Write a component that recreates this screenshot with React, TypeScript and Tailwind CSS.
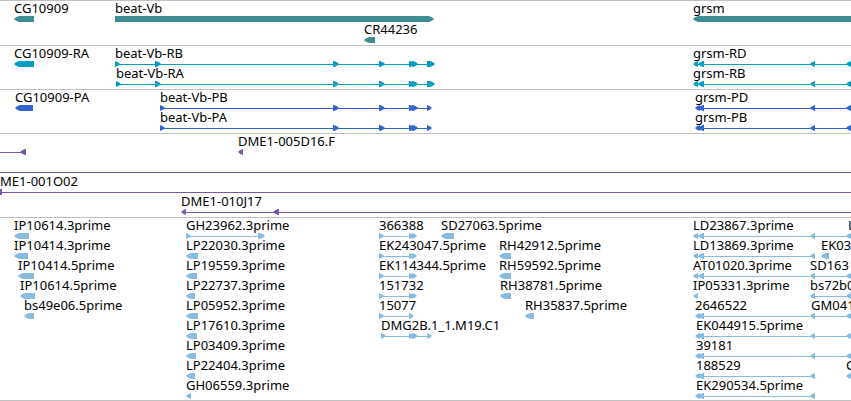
import React from "react";

type Dir = "l" | "r";
type Block = [number, number];

interface Feature {
  label?: string;
  x: number;
  dir: Dir;
  blocks: Block[];
  end?: number;
}

interface Track {
  name: string;
  fill: string;
  spaced?: boolean;
  rows: Feature[][];
}

const EDGE = 4000;

const f = (label: string, x: number, dir: Dir, blocks: Block[], end?: number): Feature => ({
  label,
  x,
  dir,
  blocks,
  end,
});

const beatTail: Block[] = [[333, 339], [379, 385], [409, 415], [412, 418]];
const est: Block[] = [[379, 384], [409, 414], [412, 417]];
const grsmA: Block[] = [[693, 698], [698, 704]];
const grsmB: Block[] = [[695, 700], [698, 704]];
const grsmMid: Block = [810, 815];
const grsmEnd: Block = [846, 852];

const tracks: Track[] = [
  {
    name: "Genes",
    fill: "fill-[#408c92]",
    spaced: true,
    rows: [
      [
        f("CG10909", 14, "l", [[14, 34]]),
        f("beat-Vb", 115, "r", [[115, 434]]),
        f("grsm", 693, "l", [[693, EDGE]]),
      ],
      [f("CR44236", 364, "l", [[364, 375]])],
    ],
  },
  {
    name: "Transcripts",
    fill: "fill-[#009fbf]",
    rows: [
      [
        f("CG10909-RA", 14, "l", [[14, 34]]),
        f("beat-Vb-RB", 115, "r", [[115, 120], [155, 161], ...beatTail, [427, 435]]),
        f("grsm-RD", 693, "l", [...grsmA, grsmMid, grsmEnd], EDGE),
      ],
      [
        f("beat-Vb-RA", 116, "r", [[116, 121], [155, 161], ...beatTail, [427, 435]]),
        f("grsm-RB", 693, "l", [...grsmA, grsmMid, grsmEnd], EDGE),
      ],
    ],
  },
  {
    name: "Proteins",
    fill: "fill-[#3366cc]",
    rows: [
      [
        f("CG10909-PA", 15, "l", [[15, 33]]),
        f("beat-Vb-PB", 160, "r", [[160, 165], ...beatTail, [427, 432]]),
        f("grsm-PD", 695, "l", [...grsmB, grsmMid, grsmEnd], EDGE),
      ],
      [
        f("beat-Vb-PA", 160, "r", [[160, 165], ...beatTail, [427, 432]]),
        f("grsm-PB", 695, "l", [...grsmB, grsmMid, grsmEnd], EDGE),
      ],
    ],
  },
  {
    name: "Clones",
    fill: "fill-[#7758a8]",
    rows: [
      [
        { x: 0, dir: "l", blocks: [[20, 26]] },
        f("DME1-005D16.F", 238, "l", [[238, 243]]),
      ],
      [{ x: 0, dir: "l", blocks: [], end: EDGE }],
      [f("ME1-001O02", 0, "l", [[-6, 2]], EDGE)],
      [f("DME1-010J17", 181, "l", [[181, 186], [273, 279]], EDGE)],
    ],
  },
  {
    name: "ESTs",
    fill: "fill-[#88bbdd]",
    rows: [
      [
        f("IP10614.3prime", 14, "l", [[14, 29]]),
        f("GH23962.3prime", 186, "r", [[186, 191], [258, 265]]),
        f("366388", 379, "r", est),
        f("SD27063.5prime", 441, "l", [[441, 454]]),
        f("LD23867.3prime", 693, "l", [...grsmA, grsmMid, grsmEnd], EDGE),
        f("L", 848, "l", []),
      ],
      [
        f("IP10414.3prime", 14, "l", [[14, 28]]),
        f("LP22030.3prime", 186, "l", [[186, 198]]),
        f("EK243047.5prime", 379, "r", est),
        f("RH42912.5prime", 499, "l", [[499, 511]]),
        f("LD13869.3prime", 693, "l", [...grsmA, grsmMid]),
        f("EK03", 821, "l", [[821, 829]]),
      ],
      [
        f("IP10414.5prime", 18, "l", [[18, 34]]),
        f("LP19559.3prime", 186, "l", [[186, 197]]),
        f("EK114344.5prime", 379, "r", est),
        f("RH59592.5prime", 499, "l", [[499, 511]]),
        f("AT01020.3prime", 693, "l", grsmA, 810),
        f("SD163", 810, "l", [grsmMid, grsmEnd], EDGE),
      ],
      [
        f("IP10614.5prime", 20, "l", [[20, 35]]),
        f("LP22737.3prime", 186, "l", [[186, 195]]),
        f("151732", 379, "r", est),
        f("RH38781.5prime", 500, "l", [[500, 511]]),
        f("IP05331.3prime", 693, "l", [[693, 698]]),
        f("bs72b0", 810, "l", [grsmMid, grsmEnd], EDGE),
      ],
      [
        f("bs49e06.5prime", 24, "l", [[24, 34]]),
        f("LP05952.3prime", 186, "l", [[186, 198]]),
        f("15077", 379, "r", [[379, 384], [409, 414]]),
        f("RH35837.5prime", 525, "l", [[525, 534]]),
        f("2646522", 695, "l", grsmB, 810),
        f("GM041", 811, "l", [grsmMid, grsmEnd], EDGE),
      ],
      [
        f("LP17610.3prime", 186, "l", [[186, 197]]),
        f("DMG2B.1_1.M19.C1", 381, "r", [[381, 386], [409, 414], [412, 418], [427, 432]]),
        f("EK044915.5prime", 696, "l", [...grsmB, grsmMid, grsmEnd], EDGE),
      ],
      [
        f("LP03409.3prime", 186, "l", [[186, 196]]),
        f("39181", 696, "l", [...grsmB, grsmMid, grsmEnd], EDGE),
      ],
      [
        f("LP22404.3prime", 186, "l", [[186, 195]]),
        f("188529", 696, "l", [...grsmB, grsmMid]),
        f("C", 846, "l", [grsmEnd]),
      ],
      [
        f("GH06559.3prime", 186, "l", [[186, 191]]),
        f("EK290534.5prime", 696, "l", [...grsmB, grsmMid]),
      ],
    ],
  },
];

function blockPoints([a, b]: Block, dir: Dir): string {
  if (dir === "l") {
    return `${a},3 ${a + 2},1.3 ${a + 5},0 ${b},0 ${b},6 ${a + 5},6 ${a + 2},4.7`;
  }
  return `${b},3 ${b - 2},1.3 ${b - 5},0 ${a},0 ${a},6 ${b - 5},6 ${b - 2},4.7`;
}

function Glyph({ feature }: { feature: Feature }) {
  const { blocks, dir, x, end } = feature;
  const stop = end ?? (blocks.length ? blocks[blocks.length - 1][1] - 2 : x);
  const start = x > 0 ? x + 2 : 0;
  const hasLine = end !== undefined || blocks.length > 1 || (blocks.length === 1 && blocks[0][0] > x);
  return (
    <g>
      {hasLine && <rect x={start} y={3} width={stop - start} height={1} />}
      {blocks.map((b) => (
        <polygon key={b[0]} points={blockPoints(b, dir)} />
      ))}
    </g>
  );
}

function Row({ features, fill }: { features: Feature[]; fill: string }) {
  return (
    <div className="relative flex h-5 flex-col justify-end pb-px">
      <svg className={`block h-1.5 w-full ${fill}`} aria-hidden="true">
        {features.map((ft, i) => (
          <Glyph key={i} feature={ft} />
        ))}
      </svg>
      {features.map(
        (ft) =>
          ft.label && (
            <span
              key={ft.label}
              className="absolute -top-1 text-[13px] leading-[18px] whitespace-nowrap"
              style={{ left: ft.x }}
            >
              {ft.label}
            </span>
          ),
      )}
    </div>
  );
}

export default function App() {
  return (
    <main className="w-full overflow-hidden border-b border-[#c0c0c0] bg-white font-['Noto_Sans',sans-serif] text-black">
      {tracks.map((track) => (
        <section
          key={track.name}
          aria-label={track.name}
          className={`flex flex-col border-t border-[#c0c0c0] pt-0.5 pb-px last:pb-0 ${track.spaced ? "gap-px" : ""}`}
        >
          {track.rows.map((row, i) => (
            <Row key={i} features={row} fill={track.fill} />
          ))}
        </section>
      ))}
    </main>
  );
}
